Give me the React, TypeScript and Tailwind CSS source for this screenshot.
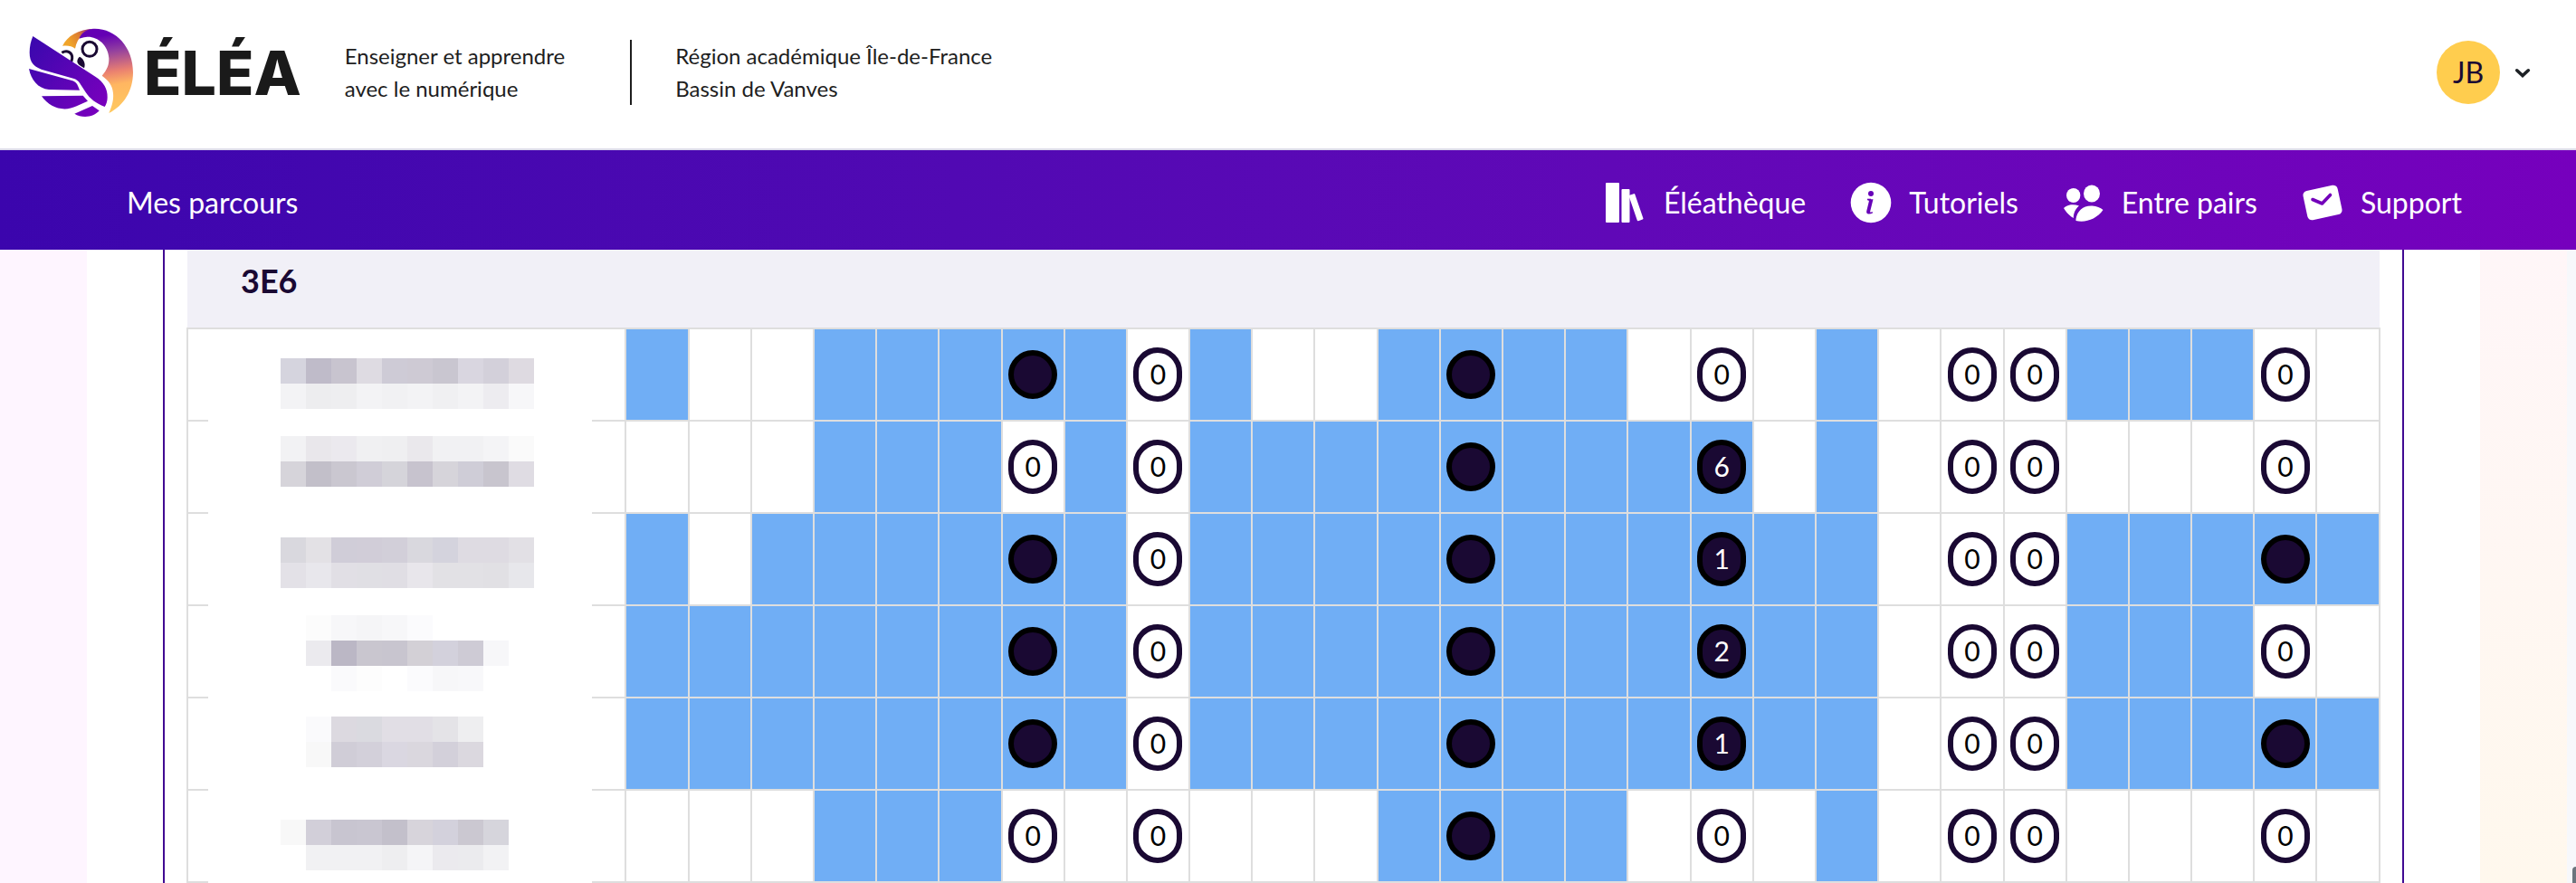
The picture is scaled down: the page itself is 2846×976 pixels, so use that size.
import React from "react";

type Badge = { column: number; label: string };
type Student = { done: string; badges: Badge[]; name: string[] };

const GROUP = "3E6";

const STUDENTS: Student[] = [
  {
    done: "x..xxxxx.x..xxxx...x...xxx..",
    badges: badges("6: 8:0 13: 17:0 21:0 22:0 26:0"),
    name: [
      "d5d4de bfbbc9 c8c4cf dedbe2 cecbd6 cecad4 c9c6d0 d9d6e0 d3d0da dedae1",
      "f3f3f5 ededef eeeef0 f3f3f5 f1f1f3 f3f3f5 f0f0f2 f3f3f5 edecf0 f7f7f9",
    ],
  },
  {
    done: "...xxx.x.xxxxxxxxx.x........",
    badges: badges("6:0 8:0 13: 17:6 21:0 22:0 26:0"),
    name: [
      "f2f2f4 e9e7eb ebe9ee f0f0f2 efeff1 eae8ec f1f1f3 f1f1f3 f4f4f6 fafafa",
      "d6d4da c2bfc9 cac7d0 d0cdd7 d5d4da c7c3ce d6d4da cfcdd7 c8c5ce dfdce3",
    ],
  },
  {
    done: "x.xxxxxx.xxxxxxxxxxx...xxxxx",
    badges: badges("6: 8:0 13: 17:1 21:0 22:0 26:"),
    name: [
      "d9d8de e3e1e5 d0cdd8 d1cdd8 d2cfd9 d9d8de d4d3dd dedbe2 dedbe2 e2e0e5",
      "e3e1e7 e8e7ec e1dfe5 e0dfe4 e0dee4 e8e6eb e2e1e5 e2e1e5 e1e0e4 e7e7eb",
    ],
  },
  {
    done: "xxxxxxxx.xxxxxxxxxxx...xxx..",
    badges: badges("6: 8:0 13: 17:2 21:0 22:0 26:0"),
    name: [
      "ffffff fcfcfc f7f7f9 f5f5f7 f7f7f9 fbfbfd ffffff ffffff ffffff ffffff",
      "ffffff ebeaee bbb7c5 c9c6cf c8c5cf d3d0d6 d3d1dc cecbd5 f7f7f9 ffffff",
      "ffffff ffffff fafafc fdfdfd ffffff fbfbfd f7f7f9 f8f8fa ffffff ffffff",
    ],
  },
  {
    done: "xxxxxxxx.xxxxxxxxxxx...xxxxx",
    badges: badges("6: 8:0 13: 17:1 21:0 22:0 26:"),
    name: [
      "ffffff fafafc dcd9e0 dadae0 e1dee5 e1dee5 e4e3e7 eeeef0 ffffff ffffff",
      "ffffff f8f8f8 d0cdd7 d3d0da dad7e1 dad7de d3d0da dbd8df ffffff ffffff",
    ],
  },
  {
    done: "...xxx......xxxx...x........",
    badges: badges("6:0 8:0 13: 17:0 21:0 22:0 26:0"),
    name: [
      "f8f8f8 d2cfd9 c8c5d0 c9c6d1 c3c0cb d7d4db d3d1dc cbc8d1 d6d5dc ffffff",
      "ffffff f1f1f3 f1f1f3 f1f1f3 eeeef0 f5f5f7 ebeaee ebebee f2f2f4 ffffff",
    ],
  },
];

const NAME_OFFSETS = ["pt-8", "pt-4", "pt-[26px]", "pt-[10px]", "pt-5", "pt-8"];

function badges(spec: string): Badge[] {
  return spec.split(" ").map((entry) => {
    const [column, label] = entry.split(":");
    return { column: Number(column), label };
  });
}

function Logo() {
  return (
    <svg viewBox="96 96 348 294" className="h-[98px] w-[116px] shrink-0" aria-hidden="true">
      <defs>
        <linearGradient id="body" gradientUnits="userSpaceOnUse" x1="330" y1="100" x2="375" y2="375">
          <stop offset="0.08" stopColor="#6400b4" />
          <stop offset="0.28" stopColor="#93409f" />
          <stop offset="0.52" stopColor="#ea8070" />
          <stop offset="0.68" stopColor="#ffb661" />
          <stop offset="1" stopColor="#ffc95f" />
        </linearGradient>
        <linearGradient id="crest" gradientUnits="userSpaceOnUse" x1="212" y1="150" x2="290" y2="105">
          <stop offset="0.2" stopColor="#f0a429" />
          <stop offset="0.65" stopColor="#dd7d32" />
          <stop offset="1" stopColor="#a03a78" />
        </linearGradient>
        <linearGradient id="wing" gradientUnits="userSpaceOnUse" x1="100" y1="150" x2="350" y2="340">
          <stop offset="0" stopColor="#3b08ae" />
          <stop offset="1" stopColor="#7800bd" />
        </linearGradient>
      </defs>
      <path fill="url(#crest)" d="M207 155 C224 122 258 100 312 98 C282 105 256 125 249 164 C238 155 224 153 207 155Z" />
      <path
        fill="url(#body)"
        d="M262 131 C270 110 290 98 314 98 C385 98 441 160 441 243 C441 304 410 354 361 378 C372 352 377 335 375 312 C373 286 359 269 338 254 C355 235 362 218 361 196 C358 150 320 122 285 126 C276 127 269 129 262 131Z"
      />
      <circle cx="297" cy="166" r="24" fill="none" stroke="#1a0933" strokeWidth="9" />
      <path fill="none" stroke="#1a0933" strokeWidth="9" d="M205 178 C222 167 241 177 239 197 C239 203 236 207 232 211" />
      <path fill="#1a0933" d="M264 191 C274 195 286 212 279 229 C269 222 258 219 256 208 C256 200 259 195 264 191Z" />
      <path
        fill="url(#wing)"
        d="M109 123 L316 257 C344 275 357 298 356 326 C356 339 352 349 347 357 C317 345 298 330 284 309 L264 278 C259 270 253 266 243 263 L150 237 C113 227 98 212 98 177 C98 157 102 140 109 123Z"
      />
      <path fill="url(#wing)" d="M96 231 L238 270 C252 274 255 279 264 302 L162 300 C125 296 103 268 96 231Z" />
      <path fill="url(#wing)" d="M138 322 L275 320 L291 338 L254 355 C212 375 166 362 138 322Z" />
      <path fill="url(#wing)" d="M247 380 L306 354 L329 370 C311 392 272 396 247 380Z" />
    </svg>
  );
}

function BooksIcon() {
  return (
    <svg viewBox="0 0 48 48" className="size-12 shrink-0 fill-white" aria-hidden="true">
      <rect x="2" y="2" width="15" height="44" rx="1" />
      <rect x="19.500" y="9" width="9" height="37" rx="1" />
      <rect x="28" y="16" width="7" height="30" rx="1" transform="rotate(-19 28 18)" />
    </svg>
  );
}

function InfoIcon() {
  return (
    <svg viewBox="0 0 48 48" className="size-12 shrink-0" aria-hidden="true">
      <circle cx="24" cy="24" r="22.300" fill="#fff" />
      <circle cx="24" cy="14" r="3" fill="#6702b8" />
      <path fill="none" stroke="#6702b8" strokeWidth="1.600" d="M20 20.500h4" />
      <path fill="#6702b8" d="M21 20.300h5.500l-3.300 13.200c-.2 1 .3 1.300 1 1.100l2-.4-.3 1.200c-1.500.8-3 1.200-4.300 1.100-2.200-.1-2.800-1.600-2.300-3.500l2.500-10.300c.2-.9 0-1.100-.9-1.200z" />
    </svg>
  );
}

function PeersIcon() {
  return (
    <svg viewBox="0 0 48 48" className="size-12 shrink-0 fill-white" aria-hidden="true">
      <ellipse cx="12.700" cy="16" rx="7.700" ry="8" />
      <ellipse cx="33" cy="14" rx="9" ry="9.500" />
      <path d="M2 30c5-4.500 11-4.500 17-2.500-4 3.500-6 7.500-6.200 13.500C8.500 38.500 5 35 2 30z" />
      <path d="M15.500 42c1.500-9 8-15 18-14.500 5 .2 9 2 12 4.500-7 10-19 14.500-30 12z" />
    </svg>
  );
}

function SupportIcon() {
  return (
    <svg viewBox="0 0 48 48" className="size-12 shrink-0" aria-hidden="true">
      <rect x="4.500" y="7.500" width="39" height="33" rx="5" fill="#fff" transform="rotate(-12 24 24)" />
      <path d="M13 20.500l10.500 4.500 9-9.500" fill="none" stroke="#7300ba" strokeWidth="3.600" strokeLinecap="round" strokeLinejoin="round" />
    </svg>
  );
}

const LINKS = [
  { label: "Éléathèque", Icon: BooksIcon },
  { label: "Tutoriels", Icon: InfoIcon },
  { label: "Entre pairs", Icon: PeersIcon },
  { label: "Support", Icon: SupportIcon },
];

function Header() {
  return (
    <header className="flex h-[166px] items-center border-b-2 border-[#dddbea] bg-white pr-[50px] pb-1 pl-8 text-[#1e1e1e]">
      <a href="#accueil" className="flex items-center gap-[11px]">
        <Logo />
        <span className="font-[Inter,sans-serif] text-[68px] leading-[96px] font-extrabold text-[#1a1a1a]">ÉLÉA</span>
      </a>
      <p className="ml-12 border-r-2 border-[#1e1e1e] pr-[72px] text-2xl leading-9">
        Enseigner et apprendre
        <br />
        avec le numérique
      </p>
      <p className="ml-12 text-2xl leading-9">
        Région académique Île-de-France
        <br />
        Bassin de Vanves
      </p>
      <button type="button" aria-label="Menu utilisateur" className="ml-auto flex items-center gap-4">
        <span className="flex size-[70px] items-center justify-center rounded-full bg-[#ffcd4e] text-[32px] text-[#1a0933]">JB</span>
        <svg viewBox="0 0 20 14" className="h-[13px] w-[18px]" fill="none" stroke="#1d2125" strokeWidth="4" aria-hidden="true">
          <path d="M3 4l7 6.500L17 4" strokeLinecap="round" />
        </svg>
      </button>
    </header>
  );
}

function NavBar() {
  return (
    <nav className="flex h-[110px] items-center justify-between bg-linear-to-r from-[#3b05ad] to-[#7600bd] pt-[6px] pr-[126px] pl-[140px] text-[32px] text-white">
      <a href="#parcours">Mes parcours</a>
      <ul className="flex gap-12">
        {LINKS.map(({ label, Icon }) => (
          <li key={label}>
            <a href={`#${label}`} className="flex items-center gap-[18px]">
              <Icon />
              {label}
            </a>
          </li>
        ))}
      </ul>
    </nav>
  );
}

function HiddenName({ rows, offset }: { rows: string[]; offset: string }) {
  return (
    <div className={`relative mr-9 -mb-[2px] ml-[22px] h-[102px] bg-white ${offset}`}>
      {rows.map((row, r) => (
        <div key={r} className="ml-20 flex">
          {row.split(" ").map((color, c) => (
            <span key={c} className="size-7" style={{ backgroundColor: `#${color}` }} />
          ))}
        </div>
      ))}
    </div>
  );
}

function Attempts({ label, done }: { label: string; done: boolean }) {
  const tone = done ? "border-black bg-[#1a0933] text-white" : "border-[#1a0933] bg-white text-black";
  const height = label ? "h-[60px]" : "h-[54px]";
  return (
    <span className={`mx-auto flex w-[54px] items-center justify-center rounded-[27px] border-6 pb-[2px] text-[30px] leading-none ${height} ${tone}`}>
      {label}
    </span>
  );
}

function ProgressTable() {
  return (
    <table className="w-full table-fixed border-collapse">
      <colgroup>
        <col className="w-1/5" />
        <col span={28} />
      </colgroup>
      <thead>
        <tr className="h-[87px] bg-[#f1f0f7]">
          <th colSpan={29} scope="colgroup" className="pt-0 pr-0 pb-[18px] pl-[59px] text-left text-[36px] leading-10 font-bold text-[#1a0933]">
            {GROUP}
          </th>
        </tr>
      </thead>
      <tbody>
        {STUDENTS.map((student, r) => (
          <tr key={r} className="h-[102px]">
            <th scope="row" aria-label={`Élève ${r + 1}`} className="border-2 border-[#dedede] p-0 align-top">
              <HiddenName rows={student.name} offset={NAME_OFFSETS[r]} />
            </th>
            {student.done.split("").map((state, c) => {
              const badge = student.badges.find((item) => item.column === c);
              const done = state === "x";
              return (
                <td key={c} className={`border-2 border-[#dedede] p-0 ${done ? "bg-[#70aef5]" : "bg-white"}`}>
                  {badge && <Attempts label={badge.label} done={done} />}
                </td>
              );
            })}
          </tr>
        ))}
      </tbody>
    </table>
  );
}

export default function App() {
  return (
    <div className="flex h-screen flex-col overflow-hidden font-[Lato,sans-serif]">
      <Header />
      <NavBar />
      <div className="flex min-h-0 flex-1">
        <div className="w-24 bg-[#fef5ff]" />
        <main className="min-w-0 flex-1 overflow-hidden bg-white pr-[84px] pl-[84px]">
          <section className="border-x-2 border-[#410a92] px-6">
            <ProgressTable />
          </section>
        </main>
        <div className="w-24 bg-linear-to-b from-[#fff6f8] to-[#fff8ed]" />
        <div className="flex w-[10px] items-end justify-end bg-[#f7f8fb]">
          <span className="h-[18px] w-1 rounded-tl-md bg-[#6b757d]" />
        </div>
      </div>
    </div>
  );
}
